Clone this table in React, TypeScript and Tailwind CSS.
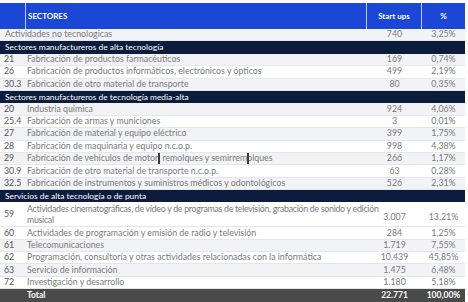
type Row = {
  kind: "item" | "group" | "total";
  code?: string;
  label: React.ReactNode;
  count?: string;
  pct?: string;
  tall?: boolean;
  wide?: boolean;
};

const Caret = () => (
  <span className="relative inline-block w-0 h-[9px] align-middle">
    <span className="absolute left-0 top-[-1px] h-[11px] w-[1.5px] bg-[#3a3a3a]" />
  </span>
);

const rows: Row[] = [
  { kind: "item", label: "Actividades no tecnologicas", count: "740", pct: "3,25%", wide: true },
  { kind: "group", label: "Sectores manufactureros de alta tecnología" },
  { kind: "item", code: "21", label: "Fabricación de productos farmacéuticos", count: "169", pct: "0,74%" },
  { kind: "item", code: "26", label: "Fabricación de productos informáticos, electrónicos y ópticos", count: "499", pct: "2,19%" },
  { kind: "item", code: "30.3", label: "Fabricación de otro material de transporte", count: "80", pct: "0,35%" },
  { kind: "group", label: "Sectores manufactureros de tecnología media-alta" },
  { kind: "item", code: "20", label: "Industria química", count: "924", pct: "4,06%" },
  { kind: "item", code: "25.4", label: "Fabricación de armas y municiones", count: "3", pct: "0,01%" },
  { kind: "item", code: "27", label: "Fabricación de material y equipo eléctrico", count: "399", pct: "1,75%" },
  { kind: "item", code: "28", label: "Fabricación de maquinaria y equipo n.c.o.p.", count: "998", pct: "4,38%" },
  {
    kind: "item",
    code: "29",
    label: (
      <>
        Fabricación de vehículos de motor<Caret />, remolques y semirrem<Caret />olques
      </>
    ),
    count: "266",
    pct: "1,17%",
  },
  { kind: "item", code: "30.9", label: "Fabricación de otro material de transporte n.c.o.p.", count: "63", pct: "0,28%" },
  { kind: "item", code: "32.5", label: "Fabricación de instrumentos y suministros médicos y odontológicos", count: "526", pct: "2,31%" },
  { kind: "group", label: "Servicios de alta tecnología o de punta" },
  {
    kind: "item",
    code: "59",
    label: (
      <>
        Actividades cinematográficas, de vídeo y de programas de televisión, grabación de sonido y edición
        <br />
        musical
      </>
    ),
    count: "3.007",
    pct: "13,21%",
    tall: true,
  },
  { kind: "item", code: "60", label: "Actividades de programación y emisión de radio y televisión", count: "284", pct: "1,25%" },
  { kind: "item", code: "61", label: "Telecomunicaciones", count: "1.719", pct: "7,55%" },
  { kind: "item", code: "62", label: "Programación, consultoría y otras actividades relacionadas con la informática", count: "10.439", pct: "45,85%" },
  { kind: "item", code: "63", label: "Servicio de información", count: "1.475", pct: "6,48%" },
  { kind: "item", code: "72", label: "Investigación y desarrollo", count: "1.180", pct: "5,18%" },
  { kind: "total", label: "Total", count: "22.771", pct: "100,00%" },
];

export default function App() {
  let stripe = 0;
  return (
    <div className="w-[468px] h-[302px] bg-white overflow-hidden pt-[3px] font-['Lato','Liberation_Sans',sans-serif] text-[8.8px] leading-none">
      <div className="w-[465px]">
        <div className="flex h-[26px] bg-[#1b46d6] text-white font-bold text-[8px]">
          <div className="w-[26px] shrink-0 border-r border-white/70" />
          <div className="flex-1 min-w-0 flex items-center pl-[2px] border-r border-white/70">SECTORES</div>
          <div className="w-[55px] shrink-0 flex items-center justify-center border-r border-white/70">Start ups</div>
          <div className="w-[43px] shrink-0 flex items-center justify-center">%</div>
        </div>

        {rows.map((r, i) => {
          if (r.kind === "group") {
            stripe = 0;
            return (
              <div key={i} className="flex items-center h-[12.4px] bg-[#0c1c3d] text-white text-[8.4px] pl-[5px]">
                {r.label}
              </div>
            );
          }
          if (r.kind === "total") {
            return (
              <div key={i} className="flex h-[12.6px] bg-[#4a4a4a] text-white font-bold text-[8.5px]">
                <div className="w-[26px] shrink-0" />
                <div className="flex-1 min-w-0 flex items-center pl-[1px]">{r.label}</div>
                <div className="w-[55px] shrink-0 flex items-center justify-center">{r.count}</div>
                <div className="w-[43px] shrink-0 flex items-center justify-center">{r.pct}</div>
              </div>
            );
          }
          const bg = r.code === "59" ? "bg-white" : stripe % 2 === 0 ? "bg-[#f1f3f6]" : "bg-white";
          stripe++;
          return (
            <div
              key={i}
              className={`flex ${r.tall ? "h-[24.8px]" : "h-[12.4px]"} ${bg} border-b border-[#e4e6ea] text-[#7a7a7a]`}
            >
              {r.wide ? (
                <div className="flex-1 min-w-0 flex items-center pl-[5px] whitespace-nowrap">{r.label}</div>
              ) : (
                <>
                  <div className="w-[26px] shrink-0 flex items-center pl-[4px] text-[#555]">{r.code}</div>
                  <div
                    className={`flex-1 min-w-0 flex items-center pl-[1px] whitespace-nowrap ${
                      r.tall ? "leading-[11px] tracking-[-0.28px]" : ""
                    }`}
                  >
                    <span>{r.label}</span>
                  </div>
                </>
              )}
              <div className={`w-[55px] shrink-0 flex items-center justify-center ${r.tall ? "pt-[6px]" : ""}`}>{r.count}</div>
              <div className={`w-[43px] shrink-0 flex items-center justify-center ${r.tall ? "pt-[6px]" : ""}`}>{r.pct}</div>
            </div>
          );
        })}
      </div>
    </div>
  );
}
